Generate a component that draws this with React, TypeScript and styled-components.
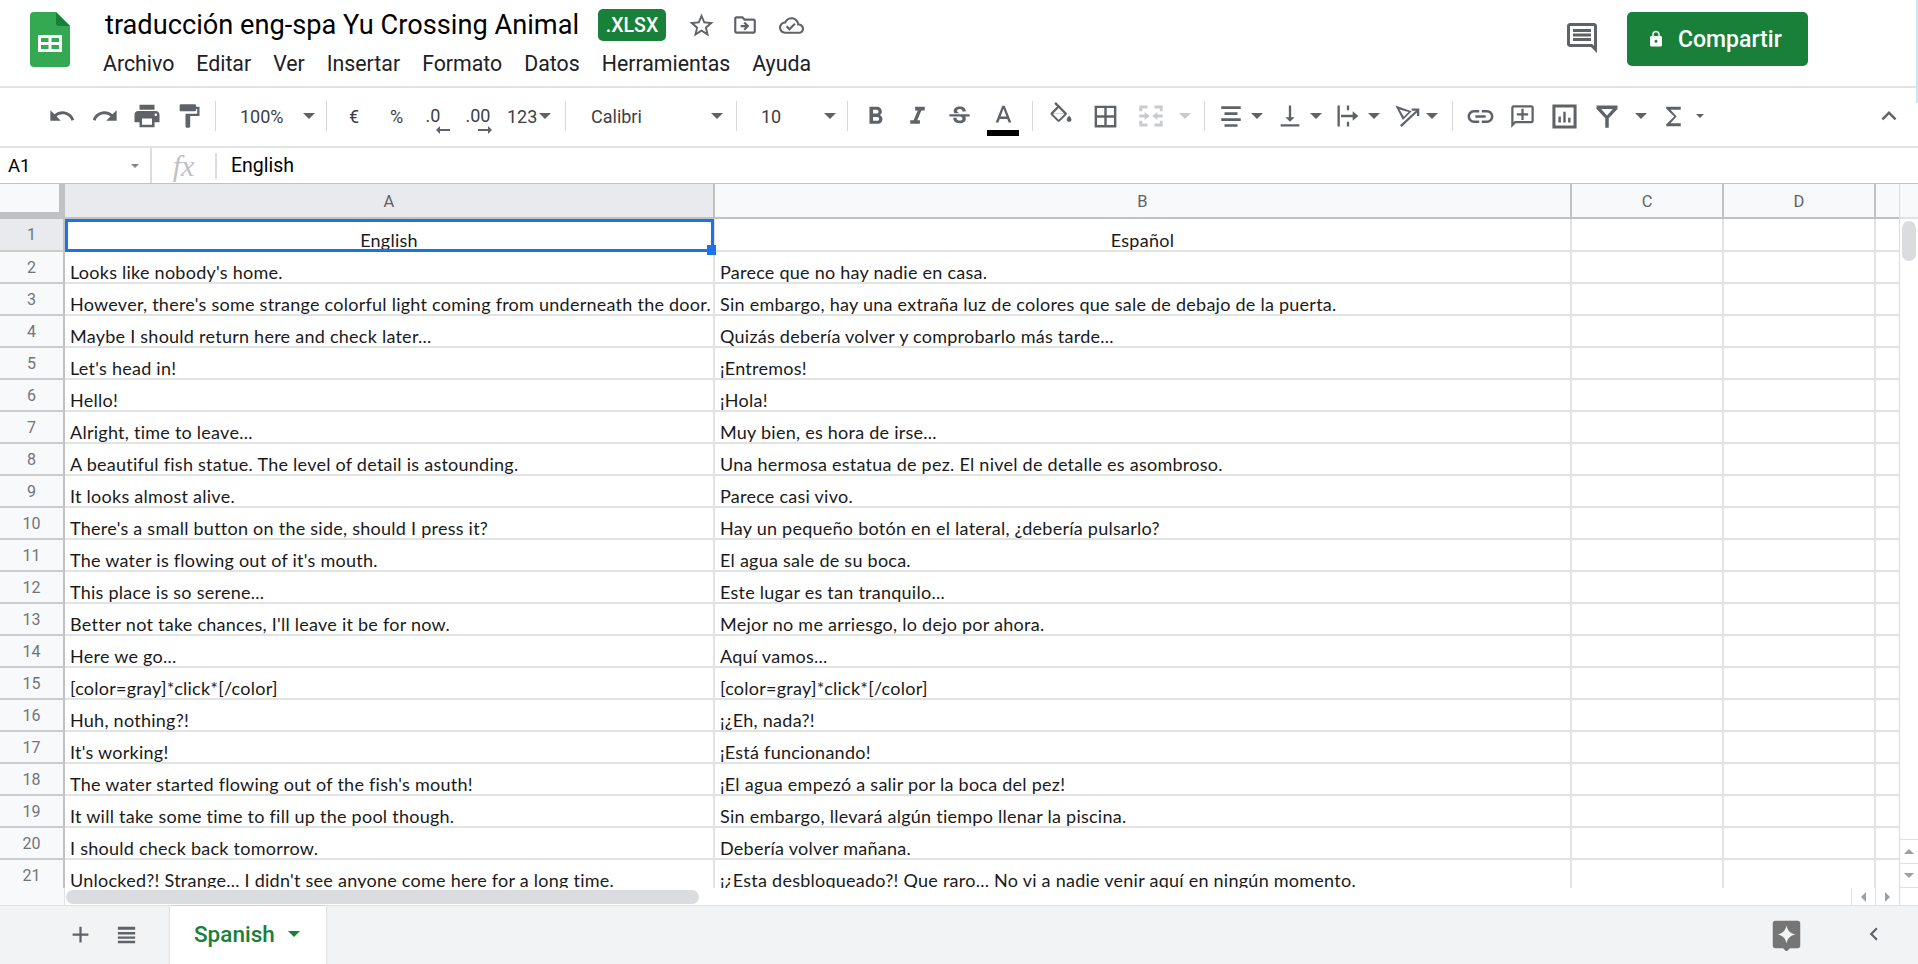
import * as React from 'react'
import styled, { createGlobalStyle } from 'styled-components'

const GlobalStyle = createGlobalStyle`
    html, body {
        margin: 0;
        padding: 0;
        height: 100%;
        background: #fff;
    }
    #root {
        height: 100%;
    }
`;

const Page = styled.div`
    position: relative;
    display: flex;
    flex-direction: column;
    height: 964px;
    width: 1918px;
    overflow: hidden;
    font-family: Roboto, "Liberation Sans", sans-serif;
    color: #202124;
`;

const EdgeStrip = styled.div`
    position: absolute;
    top: 0;
    right: 0;
    width: 2px;
    height: 103px;
    background: #c5e8f3;
`;

const TitleBar = styled.header`
    display: flex;
    flex: none;
    height: 88px;
    box-sizing: border-box;
    padding: 9px 110px 0 30px;
    border-bottom: 2px solid #e1e2e3;
`;

const LogoSvg = styled.svg`
    flex: none;
    width: 40px;
    height: 55px;
    margin: 3px 33px 0 0;
`;

const TitleColumn = styled.div`
    display: flex;
    flex-direction: column;
`;

const TitleRow = styled.div`
    display: flex;
    align-items: center;
    height: 32px;
    padding-left: 2px;
`;

const DocName = styled.div`
    font-size: 27.2px;
    color: #000;
    white-space: nowrap;
    margin-right: 19px;
`;

const Badge = styled.div`
    display: flex;
    align-items: center;
    justify-content: center;
    width: 68px;
    height: 32px;
    border-radius: 5px;
    background: #188038;
    color: #fff;
    font-size: 19.5px;
    font-weight: 500;
    margin-right: 19px;
`;

const TitleIcon = styled.button<{ $w: number; $ml?: number }>`
    display: flex;
    align-items: center;
    justify-content: center;
    width: ${(p) => p.$w}px;
    margin-left: ${(p) => p.$ml ?? 0}px;
    padding: 0;
    border: none;
    background: none;
`;

const MenuRow = styled.nav`
    display: flex;
    gap: 22px;
    margin-top: 5px;
    height: 34px;
    align-items: center;
`;

const MenuItem = styled.span`
    font-size: 21.3px;
    color: #202124;
`;

const TitleRight = styled.div`
    display: flex;
    align-items: flex-start;
    margin-left: auto;
`;

const ChatButton = styled.div`
    display: flex;
    align-items: center;
    justify-content: center;
    width: 36px;
    height: 36px;
    margin: 11px 27px 0 0;
`;

const ShareButton = styled.button`
    display: flex;
    align-items: center;
    gap: 13px;
    width: 181px;
    height: 54px;
    margin-top: 3px;
    padding: 0 0 0 20px;
    border: none;
    border-radius: 5px;
    background: #188038;
    color: #fff;
    font-family: Roboto, sans-serif;
    font-size: 23px;
    font-weight: 500;
`;

const Toolbar = styled.div`
    display: flex;
    flex: none;
    align-items: stretch;
    height: 60px;
    box-sizing: border-box;
    padding: 0 15px 2px 40px;
    border-bottom: 2px solid #e1e2e3;
    color: #3c4043;
    font-size: 18px;
`;

const Slot = styled.div<{ $w: number; $ml?: number; $push?: boolean }>`
    position: relative;
    display: flex;
    flex: none;
    align-items: center;
    justify-content: center;
    width: ${(p) => p.$w}px;
    margin-left: ${(p) => (p.$push ? 'auto' : `${p.$ml ?? 0}px`)};
`;

const ToolSep = styled.div<{ $w?: number }>`
    flex: none;
    display: flex;
    align-items: center;
    justify-content: center;
    width: ${(p) => p.$w ?? 9}px;

    &::after {
        content: '';
        width: 1px;
        height: 30px;
        background: #d5d7da;
    }
`;

const SelectBox = styled.div<{ $w: number; $pl: number; $pr: number }>`
    display: flex;
    flex: none;
    align-items: center;
    width: ${(p) => p.$w}px;
    box-sizing: border-box;
    padding: 0 ${(p) => p.$pr}px 0 ${(p) => p.$pl}px;
`;

const Caret = styled.span<{ $size?: number; $color?: string; $ml?: string }>`
    flex: none;
    width: 0;
    height: 0;
    margin-left: ${(p) => p.$ml ?? 'auto'};
    border-left: ${(p) => p.$size ?? 6}px solid transparent;
    border-right: ${(p) => p.$size ?? 6}px solid transparent;
    border-top: ${(p) => p.$size ?? 6}px solid ${(p) => p.$color ?? '#5f6368'};
`;

const CaretSlot = styled.div<{ $w?: number; $ml?: number }>`
    display: flex;
    flex: none;
    align-items: center;
    justify-content: center;
    width: ${(p) => p.$w ?? 12}px;
    margin-left: ${(p) => p.$ml ?? 0}px;
`;

const DecimalSlot = styled.div<{ $w: number; $pr?: number }>`
    display: flex;
    flex: none;
    flex-direction: column;
    align-items: center;
    width: ${(p) => p.$w}px;
    box-sizing: border-box;
    padding: 18px ${(p) => p.$pr ?? 0}px 0 0;
    line-height: 20px;
`;

const DecimalArrow = styled.svg<{ $ml?: number }>`
    width: 14px;
    height: 8px;
    margin: 0 0 0 ${(p) => p.$ml ?? 14}px;
`;

const ColorBar = styled.div`
    position: absolute;
    top: 42px;
    left: 5px;
    width: 32px;
    height: 6px;
    background: #000;
`;

const FormulaBar = styled.div`
    display: flex;
    flex: none;
    align-items: center;
    height: 36px;
    box-sizing: border-box;
    border-bottom: 1px solid #c0c1c3;
`;

const NameBox = styled.div`
    display: flex;
    align-items: center;
    width: 150px;
    box-sizing: border-box;
    padding: 0 11px 0 8px;
    font-size: 18.5px;
    color: #000;
`;

const BarSep = styled.div<{ $h: number }>`
    flex: none;
    width: 2px;
    height: ${(p) => p.$h}px;
    background: #dadce0;
`;

const FxLabel = styled.div`
    width: 63px;
    text-align: center;
    font-family: "Liberation Serif", serif;
    font-style: italic;
    font-size: 30px;
    line-height: 30px;
    color: #bdc1c6;
`;

const FormulaText = styled.div`
    padding-left: 14px;
    font-size: 19.5px;
    color: #000;
`;

const SheetArea = styled.div`
    display: flex;
    flex: 1;
    min-height: 0;
`;

const GridColumn = styled.div`
    display: flex;
    flex-direction: column;
    flex: 1;
    min-width: 0;
`;

const HeaderRow = styled.div`
    display: flex;
    flex: none;
    height: 35px;
    box-sizing: border-box;
    background: #f8f9fa;
    border-bottom: 2px solid #c0c1c3;
`;

const Corner = styled.div`
    flex: none;
    width: 65px;
    height: 35px;
    box-sizing: border-box;
    background: #f8f9fa;
    border-right: 6px solid #c0c1c3;
    border-bottom: 7px solid #c0c1c3;
`;

const ColHead = styled.div<{ $w: number; $active?: boolean }>`
    display: flex;
    flex: none;
    align-items: center;
    justify-content: center;
    width: ${(p) => p.$w}px;
    box-sizing: border-box;
    padding-top: 1px;
    border-right: 2px solid #c0c1c3;
    background: ${(p) => (p.$active ? '#e8eaed' : '#f8f9fa')};
    color: #5f6368;
    font-size: 16.5px;
`;

const Rows = styled.div`
    flex: 1;
    min-height: 0;
    overflow: hidden;
`;

const Row = styled.div<{ $first?: boolean }>`
    display: flex;
    height: ${(p) => (p.$first ? 33 : 32)}px;
`;

const RowHead = styled.div<{ $active?: boolean }>`
    display: flex;
    flex: none;
    align-items: center;
    justify-content: center;
    width: 65px;
    box-sizing: border-box;
    background: ${(p) => (p.$active ? '#e8eaed' : '#f8f9fa')};
    border-right: 2px solid #c0c1c3;
    border-bottom: 2px solid #cbcccd;
    color: #70757a;
    font-size: 16px;
`;

const Cell = styled.div<{ $w: number; $center?: boolean }>`
    position: relative;
    display: flex;
    flex: none;
    align-items: flex-end;
    justify-content: ${(p) => (p.$center ? 'center' : 'flex-start')};
    width: ${(p) => p.$w}px;
    box-sizing: border-box;
    padding-left: ${(p) => (p.$center ? 0 : 5)}px;
    border-right: 2px solid #e1e2e3;
    border-bottom: 2px solid #e1e2e3;
    font-family: Lato, "Liberation Sans", sans-serif;
    font-size: 18px;
    letter-spacing: 0.25px;
    line-height: 19px;
    color: #1a1a1a;
    white-space: nowrap;
`;

const Selection = styled.div`
    position: absolute;
    z-index: 2;
    top: 0;
    left: 0;
    right: -1px;
    bottom: -2px;
    border: 3px solid #1a73e8;
`;

const FillHandle = styled.div`
    position: absolute;
    right: -5px;
    bottom: -6px;
    width: 9px;
    height: 10px;
    background: #1a73e8;
`;

const HScrollStrip = styled.div`
    display: flex;
    flex: none;
    height: 17px;
    background: #fff;
`;

const HScrollGutter = styled.div`
    flex: none;
    width: 65px;
    box-sizing: border-box;
    background: #f8f9fa;
    border-right: 1px solid #e1e2e3;
`;

const HThumb = styled.div`
    width: 633px;
    height: 14px;
    margin: 2px 0 0 1px;
    border-radius: 7px;
    background: #dadce0;
`;

const ScrollButtons = styled.div`
    display: flex;
    margin-left: auto;
`;

const ScrollButton = styled.div`
    display: flex;
    align-items: center;
    justify-content: center;
    width: 24px;
    box-sizing: border-box;
    border-left: 1px solid #e1e2e3;
`;

const ArrowSide = styled.span<{ $dir: 'left' | 'right' }>`
    width: 0;
    height: 0;
    border-top: 5px solid transparent;
    border-bottom: 5px solid transparent;
    ${(p) => (p.$dir === 'left' ? 'border-right' : 'border-left')}: 5px solid #9aa0a6;
`;

const ArrowUpDown = styled.span<{ $dir: 'up' | 'down' }>`
    width: 0;
    height: 0;
    border-left: 5px solid transparent;
    border-right: 5px solid transparent;
    ${(p) => (p.$dir === 'up' ? 'border-bottom' : 'border-top')}: 5px solid #9aa0a6;
`;

const VScroll = styled.div`
    display: flex;
    flex: none;
    flex-direction: column;
    width: 19px;
    box-sizing: border-box;
    border-left: 1px solid #dadce0;
`;

const VHeader = styled.div`
    flex: none;
    height: 35px;
    box-sizing: border-box;
    background: #f8f9fa;
    border-bottom: 2px solid #e1e2e3;
`;

const VThumb = styled.div`
    flex: none;
    width: 14px;
    height: 40px;
    margin: 2px 0 0 2px;
    border-radius: 7px;
    background: #dadce0;
`;

const VButton = styled.div<{ $first?: boolean }>`
    display: flex;
    flex: none;
    align-items: center;
    justify-content: center;
    height: 23px;
    margin-top: ${(p) => (p.$first ? 'auto' : '0')};
    border-top: 1px solid #e1e2e3;
`;

const VCorner = styled.div`
    flex: none;
    height: 17px;
    border-top: 1px solid #e1e2e3;
`;

const TabBar = styled.footer`
    display: flex;
    flex: none;
    align-items: stretch;
    height: 59px;
    box-sizing: border-box;
    padding: 0 30px 2px 72px;
    background: #f1f3f4;
    border-top: 1px solid #e1e2e3;
`;

const TabTool = styled.div<{ $w: number; $ml?: number }>`
    display: flex;
    align-items: center;
    justify-content: center;
    width: ${(p) => p.$w}px;
    margin-left: ${(p) => p.$ml ?? 0}px;
`;

const SheetTab = styled.div`
    display: flex;
    align-items: center;
    width: 156px;
    box-sizing: border-box;
    margin: 0 0 -2px 34px;
    padding: 0 0 2px 24px;
    background: #fff;
    box-shadow: 0 0 2px rgba(60, 64, 67, 0.3);
    color: #188038;
    font-size: 22.5px;
    font-weight: 500;
`;

const TabRight = styled.div`
    display: flex;
    align-items: center;
    margin-left: auto;
`;

const GlyphSvg = styled.svg`
    flex: none;
`;

const Glyph: React.FC<{ d: string; size?: number; color?: string }> = ({ d, size = 29, color = '#5f6368' }) => (
    <GlyphSvg width={size} height={size} viewBox="0 0 24 24" fill={color} fillRule="evenodd">
        <path d={d} />
    </GlyphSvg>
);

const icons = {
    undo: 'M12.5 8c-2.65 0-5.05.99-6.9 2.6L2 7v9h9l-3.62-3.62c1.39-1.16 3.16-1.88 5.12-1.88 3.54 0 6.55 2.31 7.6 5.5l2.37-.78C21.08 11.03 17.15 8 12.5 8z',
    redo: 'M18.4 10.6C16.55 8.99 14.15 8 11.5 8c-4.65 0-8.58 3.03-9.96 7.22L3.9 16c1.05-3.19 4.05-5.5 7.6-5.5 1.95 0 3.73.72 5.12 1.88L13 16h9V7l-3.6 3.6z',
    print: 'M19 8H5c-1.66 0-3 1.34-3 3v6h4v4h12v-4h4v-6c0-1.66-1.34-3-3-3zm-3 11H8v-5h8v5zm3-7c-.55 0-1-.45-1-1s.45-1 1-1 1 .45 1 1-.45 1-1 1zm-1-9H6v4h12V3z',
    paint: 'M18 4V3c0-.55-.45-1-1-1H5c-.55 0-1 .45-1 1v4c0 .55.45 1 1 1h12c.55 0 1-.45 1-1V6h1v4H9v11c0 .55.45 1 1 1h2c.55 0 1-.45 1-1v-9h8V4h-3z',
    bold: 'M15.6 10.79c.97-.67 1.65-1.77 1.65-2.79 0-2.26-1.75-4-4-4H7v14h7.04c2.09 0 3.71-1.7 3.71-3.79 0-1.52-.86-2.82-2.15-3.42zM10 6.5h3c.83 0 1.5.67 1.5 1.5s-.67 1.5-1.5 1.5h-3v-3zm3.5 9H10v-3h3.5c.83 0 1.5.67 1.5 1.5s-.67 1.5-1.5 1.5z',
    italic: 'M10 4v3h2.21l-3.42 8H6v3h8v-3h-2.21l3.42-8H18V4z',
    strike: 'M7.24 8.75c-.26-.48-.39-1.03-.39-1.67 0-.61.13-1.16.4-1.67.26-.5.63-.93 1.11-1.29.48-.35 1.05-.63 1.7-.83.66-.19 1.39-.29 2.18-.29.81 0 1.54.11 2.21.34.66.22 1.23.54 1.69.94.47.4.83.88 1.08 1.43s.38 1.15.38 1.81h-3.01c0-.31-.05-.59-.15-.85-.09-.27-.24-.49-.44-.68-.2-.19-.45-.33-.75-.44-.3-.1-.66-.16-1.06-.16-.39 0-.74.04-1.03.13s-.53.21-.72.36c-.19.16-.34.34-.44.55-.1.21-.15.43-.15.66 0 .48.25.88.74 1.21.38.25.77.48 1.41.7H7.39c-.05-.08-.11-.17-.15-.25zM21 12v-2H3v2h9.62c.18.07.4.14.55.2.37.17.66.34.87.51s.35.36.43.57c.07.2.11.43.11.69 0 .23-.05.45-.14.66-.09.2-.23.38-.42.53-.19.15-.42.26-.71.35-.29.08-.63.13-1.01.13-.43 0-.83-.04-1.18-.13s-.66-.23-.91-.42c-.25-.19-.45-.44-.59-.75s-.25-.76-.25-1.21H6.4c0 .55.08 1.13.24 1.58s.37.85.65 1.21c.28.35.6.66.98.92.37.26.78.48 1.22.65.44.17.9.3 1.38.39.48.08.96.13 1.44.13.8 0 1.53-.09 2.18-.28s1.21-.45 1.67-.79c.46-.34.82-.77 1.07-1.27s.38-1.07.38-1.71c0-.6-.1-1.14-.31-1.61-.05-.11-.11-.23-.17-.33H21z',
    textA: 'M11 3L5.5 17h2.25l1.12-3h6.25l1.12 3h2.25L13 3h-2zm-1.38 9L12 5.67 14.38 12H9.62z',
    fill: 'M16.56 8.94L7.62 0 6.21 1.41l2.38 2.38-5.15 5.15c-.59.59-.59 1.54 0 2.12l5.5 5.5c.29.29.68.44 1.06.44s.77-.15 1.06-.44l5.5-5.5c.59-.58.59-1.53 0-2.12zM5.21 10L10 5.21 14.79 10H5.21zM19 11.5s-2 2.17-2 3.5c0 1.1.9 2 2 2s2-.9 2-2c0-1.33-2-3.5-2-3.5z',
    fillLower: 'M5 10.2h10L10 15.2z',
    borders: 'M3 3v18h18V3H3zm8 16H5v-6h6v6zm0-8H5V5h6v6zm8 8h-6v-6h6v6zm0-8h-6V5h6v6z',
    merge: 'M2 3h7v2.500H4.500V8H2zM15 3h7v5h-2.500V5.500H15zM2 16h2.500v2.500H9V21H2zM19.500 16H22v5h-7v-2.500h4.500zM2 10.800h4.500V8.500L11 12l-4.500 3.500v-2.300H2zM22 10.800h-4.500V8.500L13 12l4.500 3.500v-2.300H22z',
    alignCenter: 'M3 3h18v2.500H3zM6 8.500h12V11H6zM3 14h18v2.500H3zM6 19.500h12V22H6z',
    valign: 'M16 13h-3V3h-2v10H8l4 4 4-4zM4 19v2h16v-2H4z',
    wrap: 'M3 3h2v18H3zM11 3h2v4h-2zM11 17h2v4h-2zM6 11h10V8l5 4-5 4v-3H6z',
    rotate: 'M2 3l14 5-7.5 7.5L2 3zm3.6 3.5l3.7 6.1 4-4-7.7-2.1zM6 20L19.6 7.4H16V5.5h6.5V12h-2V8.9L7.4 21.5z',
    link: 'M3.9 12c0-1.71 1.39-3.1 3.1-3.1h4V7H7c-2.76 0-5 2.24-5 5s2.24 5 5 5h4v-1.9H7c-1.71 0-3.1-1.39-3.1-3.1zM8 13h8v-2H8v2zm9-6h-4v1.9h4c1.71 0 3.1 1.39 3.1 3.1s-1.39 3.1-3.1 3.1h-4V17h4c2.76 0 5-2.24 5-5s-2.24-5-5-5z',
    addComment: 'M20 2H4c-1.1 0-2 .9-2 2v18l4-4h14c1.1 0 2-.9 2-2V4c0-1.1-.9-2-2-2zm0 14H5.17L4 17.17V4h16v12zM13 5h-2v4H7v2h4v4h2v-4h4V9h-4z',
    chart: 'M2 2h20v20H2zM4.5 4.5v15h15v-15zM7 12h2v5H7zM11 8h2v9h-2zM15 13h2v4h-2z',
    filter: 'M3 3h18v3l-7.5 8v8h-3v-8L3 6zM7 6l5 5.500L17 6z',
    sigma: 'M18 4H6v1.600l6.600 6.400L6 18.400V20h12v-2.400H9.500l5.100-5.600-5.100-5.600H18z',
    collapse: 'M7.41 15.41L12 10.83l4.59 4.58L18 14l-6-6-6 6z',
    chat: 'M21.99 4c0-1.1-.89-2-1.99-2H4c-1.1 0-2 .9-2 2v12c0 1.1.9 2 2 2h14l4 4-.01-18zM20 4v13.17L18.83 16H4V4h16zM6 12h12v2H6zm0-3h12v2H6zm0-3h12v2H6z',
    star: 'M22 9.24l-7.19-.62L12 2 9.19 8.63 2 9.24l5.46 4.73L5.82 21 12 17.27 18.18 21l-1.63-7.03L22 9.24zM12 15.4l-3.76 2.27 1-4.28-3.32-2.88 4.38-.38L12 6.1l1.71 4.04 4.38.38-3.32 2.88 1 4.28L12 15.4z',
    move: 'M20 6h-8l-2-2H4c-1.1 0-1.99.9-1.99 2L2 18c0 1.1.9 2 2 2h16c1.1 0 2-.9 2-2V8c0-1.1-.9-2-2-2zm0 12H4V6h5.17l2 2H20v10zm-8.01-9l-1.41 1.41L12.16 12H8v2h4.16l-1.59 1.59L11.99 17 16 13.01 11.99 9z',
    cloud: 'M19.35 10.04C18.67 6.59 15.64 4 12 4 9.11 4 6.6 5.64 5.35 8.04 2.34 8.36 0 10.91 0 14c0 3.31 2.69 6 6 6h13c2.76 0 5-2.24 5-5 0-2.64-2.05-4.78-4.65-4.96zM19 18H6c-2.21 0-4-1.79-4-4s1.79-4 4-4h.71C7.37 7.69 9.48 6 12 6c3.04 0 5.5 2.46 5.5 5.5v.5H19c1.66 0 3 1.34 3 3s-1.34 3-3 3zm-9-3.82l-2.09-2.09L6.5 13.5 10 17l6.01-6.01-1.41-1.41z',
    lock: 'M18 8h-1V6c0-2.76-2.24-5-5-5S7 3.24 7 6v2H6c-1.1 0-2 .9-2 2v10c0 1.1.9 2 2 2h12c1.1 0 2-.9 2-2V10c0-1.1-.9-2-2-2zm-6 9c-1.1 0-2-.9-2-2s.9-2 2-2 2 .9 2 2-.9 2-2 2zm3.1-9H8.9V6c0-1.71 1.39-3.1 3.1-3.1 1.71 0 3.1 1.39 3.1 3.1v2z',
    plus: 'M19 13h-6v6h-2v-6H5v-2h6V5h2v6h6v2z',
    list: 'M3 4h18v3H3zM3 9.5h18v2.5H3zM3 14h18v2.5H3zM3 18.5h18V21H3z',
    explore: 'M4 2h16a2 2 0 0 1 2 2v16a2 2 0 0 1-2 2h-5.5L12 24.5 9.5 22H4a2 2 0 0 1-2-2V4a2 2 0 0 1 2-2zm8 3.5c-.8 3.8-2.7 5.7-6.5 6.5 3.8.8 5.7 2.7 6.5 6.5.8-3.8 2.7-5.7 6.500-6.500-3.800-.8-5.700-2.700-6.500-6.500z',
    chevronLeft: 'M15.41 7.41L14 6l-6 6 6 6 1.41-1.41L10.83 12z',
};

const rows: [string, string][] = [
    ["English", "Español"],
    ["Looks like nobody's home.", "Parece que no hay nadie en casa."],
    ["However, there's some strange colorful light coming from underneath the door.", "Sin embargo, hay una extraña luz de colores que sale de debajo de la puerta."],
    ["Maybe I should return here and check later...", "Quizás debería volver y comprobarlo más tarde..."],
    ["Let's head in!", "¡Entremos!"],
    ["Hello!", "¡Hola!"],
    ["Alright, time to leave...", "Muy bien, es hora de irse..."],
    ["A beautiful fish statue. The level of detail is astounding.", "Una hermosa estatua de pez. El nivel de detalle es asombroso."],
    ["It looks almost alive.", "Parece casi vivo."],
    ["There's a small button on the side, should I press it?", "Hay un pequeño botón en el lateral, ¿debería pulsarlo?"],
    ["The water is flowing out of it's mouth.", "El agua sale de su boca."],
    ["This place is so serene...", "Este lugar es tan tranquilo..."],
    ["Better not take chances, I'll leave it be for now.", "Mejor no me arriesgo, lo dejo por ahora."],
    ["Here we go...", "Aquí vamos..."],
    ["[color=gray]*click*[/color]", "[color=gray]*click*[/color]"],
    ["Huh, nothing?!", "¡¿Eh, nada?!"],
    ["It's working!", "¡Está funcionando!"],
    ["The water started flowing out of the fish's mouth!", "¡El agua empezó a salir por la boca del pez!"],
    ["It will take some time to fill up the pool though.", "Sin embargo, llevará algún tiempo llenar la piscina."],
    ["I should check back tomorrow.", "Debería volver mañana."],
    ["Unlocked?! Strange... I didn't see anyone come here for a long time.", "¡¿Esta desbloqueado?! Que raro... No vi a nadie venir aquí en ningún momento."],
];

const menus = ['Archivo', 'Editar', 'Ver', 'Insertar', 'Formato', 'Datos', 'Herramientas', 'Ayuda'];

const colWidths = [650, 857, 152, 152, 25];

export default function App() {
    return (
        <Page>
            <GlobalStyle />
            <EdgeStrip />
            <TitleBar>
                <LogoSvg viewBox="0 0 40 55">
                    <path d="M4 0H26L40 14V51a4 4 0 0 1-4 4H4a4 4 0 0 1-4-4V4a4 4 0 0 1 4-4z" fill="#34a853" />
                    <path d="M26 0L40 14H29a3 3 0 0 1-3-3z" fill="#188038" />
                    <path d="M8 23H32V40H8zM11 26v4h7.5v-4zM21.5 26v4H29v-4zM11 33v4h7.5v-4zM21.5 33v4H29v-4z" fill="#fff" fillRule="evenodd" />
                </LogoSvg>
                <TitleColumn>
                    <TitleRow>
                        <DocName>traducción eng-spa Yu Crossing Animal</DocName>
                        <Badge>.XLSX</Badge>
                        <TitleIcon $w={32}><Glyph d={icons.star} size={29} /></TitleIcon>
                        <TitleIcon $w={44} $ml={6}><Glyph d={icons.move} size={26} /></TitleIcon>
                        <TitleIcon $w={48}><Glyph d={icons.cloud} size={25} /></TitleIcon>
                    </TitleRow>
                    <MenuRow>
                        {menus.map((m) => <MenuItem key={m}>{m}</MenuItem>)}
                    </MenuRow>
                </TitleColumn>
                <TitleRight>
                    <ChatButton><Glyph d={icons.chat} size={36} /></ChatButton>
                    <ShareButton>
                        <Glyph d={icons.lock} size={18} color="#fff" />
                        Compartir
                    </ShareButton>
                </TitleRight>
            </TitleBar>
            <Toolbar>
                <Slot $w={44}><Glyph d={icons.undo} size={28} /></Slot>
                <Slot $w={42}><Glyph d={icons.redo} size={28} /></Slot>
                <Slot $w={41}><Glyph d={icons.print} size={30} /></Slot>
                <Slot $w={44}><Glyph d={icons.paint} size={28} /></Slot>
                <ToolSep />
                <SelectBox $w={102} $pl={20} $pr={7}>100%<Caret /></SelectBox>
                <ToolSep />
                <Slot $w={46}>€</Slot>
                <Slot $w={39}>%</Slot>
                <DecimalSlot $w={40} $pr={6}>
                    .0
                    <DecimalArrow $ml={20} viewBox="0 0 14 8"><path d="M0 4l4-4v3h10v2H4v3z" fill="#5f6368" /></DecimalArrow>
                </DecimalSlot>
                <DecimalSlot $w={44}>
                    .00
                    <DecimalArrow viewBox="0 0 14 8"><path d="M14 4l-4-4v3H0v2h10v3z" fill="#5f6368" /></DecimalArrow>
                </DecimalSlot>
                <SelectBox $w={61} $pl={7} $pr={10}>123<Caret /></SelectBox>
                <ToolSep />
                <SelectBox $w={162} $pl={21} $pr={9}>Calibri<Caret /></SelectBox>
                <ToolSep />
                <SelectBox $w={102} $pl={20} $pr={7}>10<Caret /></SelectBox>
                <ToolSep />
                <Slot $w={46}><Glyph d={icons.bold} /></Slot>
                <Slot $w={38}><Glyph d={icons.italic} /></Slot>
                <Slot $w={46}><Glyph d={icons.strike} size={27} /></Slot>
                <Slot $w={42}><Glyph d={icons.textA} /><ColorBar /></Slot>
                <ToolSep $w={17} />
                <Slot $w={40}><Glyph d={icons.fill + icons.fillLower} size={28} /></Slot>
                <Slot $w={49}><Glyph d={icons.borders} size={29} /></Slot>
                <Slot $w={42}><Glyph d={icons.merge} size={28} color="#c8cacd" /></Slot>
                <CaretSlot $w={26}><Caret $color="#c8cacd" $ml="0" /></CaretSlot>
                <ToolSep $w={13} />
                <Slot $w={40}><Glyph d={icons.alignCenter} size={26} /></Slot>
                <CaretSlot><Caret $ml="0" /></CaretSlot>
                <Slot $w={40} $ml={7}><Glyph d={icons.valign} size={28} /></Slot>
                <CaretSlot><Caret $ml="0" /></CaretSlot>
                <Slot $w={40} $ml={6}><Glyph d={icons.wrap} size={28} /></Slot>
                <CaretSlot><Caret $ml="0" /></CaretSlot>
                <Slot $w={39} $ml={7}><Glyph d={icons.rotate} size={28} /></Slot>
                <CaretSlot><Caret $ml="0" /></CaretSlot>
                <ToolSep $w={29} />
                <Slot $w={26}><Glyph d={icons.link} size={31} /></Slot>
                <Slot $w={59}><Glyph d={icons.addComment} size={27} /></Slot>
                <Slot $w={24}><Glyph d={icons.chart} size={29} /></Slot>
                <Slot $w={57} $ml={2}><Glyph d={icons.filter} size={28} /></Slot>
                <CaretSlot><Caret $ml="0" /></CaretSlot>
                <Slot $w={37} $ml={8}><Glyph d={icons.sigma} size={29} /></Slot>
                <CaretSlot $w={8} $ml={4}><Caret $size={4} $ml="0" /></CaretSlot>
                <Slot $w={28} $push><Glyph d={icons.collapse} size={30} /></Slot>
            </Toolbar>
            <FormulaBar>
                <NameBox>A1<Caret $size={4} $color="#80868b" /></NameBox>
                <BarSep $h={35} />
                <FxLabel>fx</FxLabel>
                <BarSep $h={26} />
                <FormulaText>English</FormulaText>
            </FormulaBar>
            <SheetArea>
                <GridColumn>
                    <HeaderRow>
                        <Corner />
                        <ColHead $w={650} $active>A</ColHead>
                        <ColHead $w={857}>B</ColHead>
                        <ColHead $w={152}>C</ColHead>
                        <ColHead $w={152}>D</ColHead>
                    </HeaderRow>
                    <Rows>
                        {rows.map(([en, es], i) => (
                            <Row key={i} $first={i === 0}>
                                <RowHead $active={i === 0}>{i + 1}</RowHead>
                                <Cell $w={colWidths[0]} $center={i === 0}>
                                    {en}
                                    {i === 0 && <Selection><FillHandle /></Selection>}
                                </Cell>
                                <Cell $w={colWidths[1]} $center={i === 0}>{es}</Cell>
                                <Cell $w={colWidths[2]} />
                                <Cell $w={colWidths[3]} />
                                <Cell $w={colWidths[4]} />
                            </Row>
                        ))}
                    </Rows>
                    <HScrollStrip>
                        <HScrollGutter />
                        <HThumb />
                        <ScrollButtons>
                            <ScrollButton><ArrowSide $dir="left" /></ScrollButton>
                            <ScrollButton><ArrowSide $dir="right" /></ScrollButton>
                        </ScrollButtons>
                    </HScrollStrip>
                </GridColumn>
                <VScroll>
                    <VHeader />
                    <VThumb />
                    <VButton $first><ArrowUpDown $dir="up" /></VButton>
                    <VButton><ArrowUpDown $dir="down" /></VButton>
                    <VCorner />
                </VScroll>
            </SheetArea>
            <TabBar>
                <TabTool $w={16}><Glyph d={icons.plus} size={27} /></TabTool>
                <TabTool $w={20} $ml={28}><Glyph d={icons.list} size={23} /></TabTool>
                <SheetTab>
                    Spanish
                    <Caret $color="#188038" $ml="13px" />
                </SheetTab>
                <TabRight>
                    <Glyph d={icons.explore} size={33} color="#757575" />
                    <TabTool $w={28} $ml={57}><Glyph d={icons.chevronLeft} size={26} color="#5f6368" /></TabTool>
                </TabRight>
            </TabBar>
        </Page>
    )
}
